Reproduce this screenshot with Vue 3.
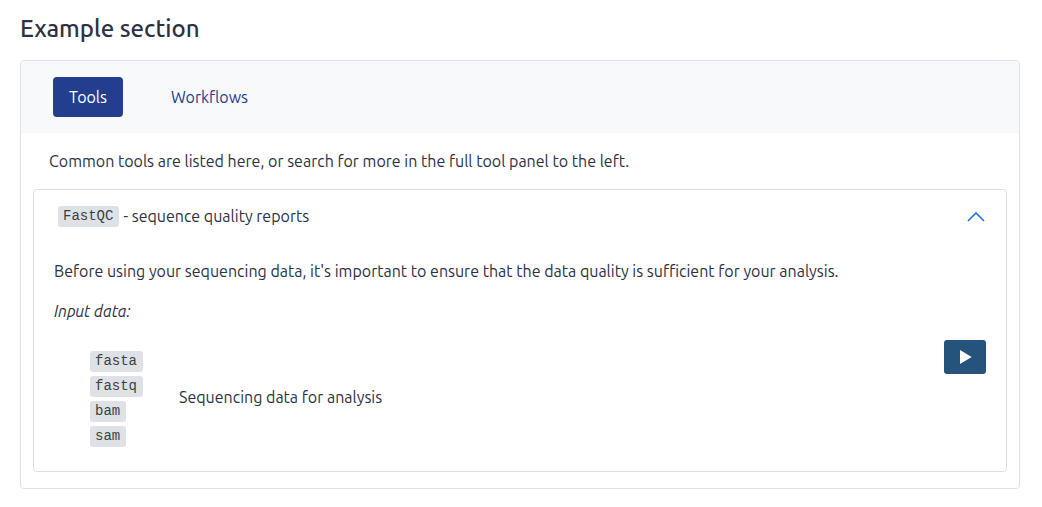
<script setup>
import { ref } from 'vue'

const tabs = ['Tools', 'Workflows']
const active = ref('Tools')
const open = ref(true)
const formats = ['fasta', 'fastq', 'bam', 'sam']
</script>

<template>
  <main class="section">
    <h1>Example section</h1>
    <div class="card">
      <nav class="tabs">
        <button
          v-for="tab in tabs"
          :key="tab"
          type="button"
          class="tab"
          :class="{ active: tab === active }"
          @click="active = tab"
        >{{ tab }}</button>
      </nav>
      <div class="body">
        <p class="intro">Common tools are listed here, or search for more in the full tool panel to the left.</p>
        <article class="tool">
          <button type="button" class="tool-head" :aria-expanded="open" @click="open = !open">
            <span class="tool-title"><code>FastQC</code> <span>- sequence quality reports</span></span>
            <svg class="chevron" :class="{ closed: !open }" viewBox="0 0 18 10" width="18" height="10" aria-hidden="true">
              <path d="M1 9 L9 1 L17 9" fill="none" stroke="#1a6fe8" stroke-width="1.6" />
            </svg>
          </button>
          <div v-if="open" class="tool-body">
            <p>Before using your sequencing data, it's important to ensure that the data quality is sufficient for your analysis.</p>
            <p><em>Input data:</em></p>
            <div class="inputs">
              <ul class="formats">
                <li v-for="f in formats" :key="f"><code>{{ f }}</code></li>
              </ul>
              <span class="desc">Sequencing data for analysis</span>
              <button type="button" class="run" aria-label="Run tool">
                <svg viewBox="0 0 14 14" width="14" height="14" aria-hidden="true">
                  <path d="M2 0 L13.7 7 L2 14 Z" fill="#fff" />
                </svg>
              </button>
            </div>
          </div>
        </article>
      </div>
    </div>
  </main>
</template>

<style>
body {
  background: #fff;
}
</style>

<style scoped>
.section {
  padding: 13px 22px 18px 20px;
  font-family: "Ubuntu", "Noto Sans", sans-serif;
  font-size: 16px;
  line-height: 24px;
  color: #2c3143;
}
h1 {
  margin: 0 0 15px;
  font-size: 24px;
  line-height: 32px;
  font-weight: 500;
}
button {
  font: inherit;
  border: 0;
  cursor: pointer;
}
.card {
  border: 1px solid #dee2e6;
  border-radius: 4px;
  overflow: hidden;
}
.tabs {
  display: flex;
  gap: 32px;
  padding: 16px 32px;
  background: #f8f9fb;
}
.tab {
  padding: 8px 16px;
  border-radius: 4px;
  background: transparent;
  color: #233d8f;
}
.tab.active {
  background: #233d8f;
  color: #fff;
}
.body {
  padding: 16px 12px;
}
.intro {
  margin: 0 16px 16px;
}
.tool {
  border: 1px solid #dedede;
  border-radius: 4px;
}
.tool-head {
  display: flex;
  align-items: center;
  justify-content: space-between;
  width: 100%;
  padding: 14px 21px 14px 24px;
  background: transparent;
  color: inherit;
  text-align: left;
}
.tool-title {
  display: flex;
  align-items: center;
  gap: 4px;
  padding-bottom: 1px;
}
.chevron.closed {
  transform: rotate(180deg);
}
.tool-body {
  padding: 16px 20px 18px;
}
.tool-body p {
  margin: 0 0 16px;
}
code {
  display: inline-block;
  padding: 0 6px 0 5px;
  border-radius: 3px;
  background: #dee2e6;
  color: #3a3f44;
  font-family: "Liberation Mono", monospace;
  font-size: 14px;
  line-height: 21px;
}
.inputs {
  display: flex;
  align-items: flex-start;
  padding-top: 1px;
}
.formats {
  display: flex;
  flex-direction: column;
  gap: 4px;
  margin: 11px 36px 6px;
  padding: 0;
  list-style: none;
}
.formats li {
  display: flex;
}
.desc {
  align-self: center;
}
.run {
  display: flex;
  align-items: center;
  justify-content: center;
  width: 42px;
  height: 34px;
  margin-left: auto;
  padding: 0;
  border-radius: 3px;
  background: #25537b;
}
</style>
